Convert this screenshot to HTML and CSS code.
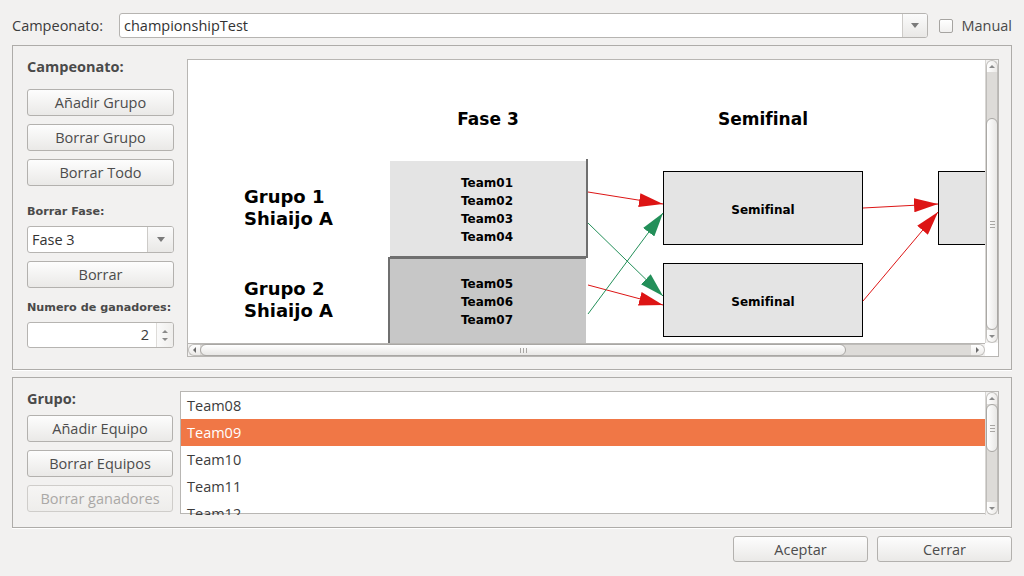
FILE: index.html
```html
<!DOCTYPE html>
<html lang="es">
<head>
<meta charset="utf-8">
<title>Campeonato</title>
<link rel="stylesheet" href="styles.css">
</head>
<body>
<div class="app">
  <div class="top-row">
    <span class="top-lbl">Campeonato:</span>
    <div class="combo combo-top">
      <span class="combo-text">championshipTest</span>
      <span class="combo-btn"><i class="tri-down"></i></span>
    </div>
    <label class="check"><span class="check-box"></span>Manual</label>
  </div>

  <section class="panel panel-upper">
    <div class="side">
      <div class="title">Campeonato:</div>
      <button class="btn btn-first">Añadir Grupo</button>
      <button class="btn btn-next">Borrar Grupo</button>
      <button class="btn btn-next">Borrar Todo</button>
      <div class="small-lbl lbl-fase">Borrar Fase:</div>
      <div class="combo combo-fase">
        <span class="combo-text">Fase 3</span>
        <span class="combo-btn"><i class="tri-down"></i></span>
      </div>
      <button class="btn btn-next">Borrar</button>
      <div class="small-lbl lbl-gan">Numero de ganadores:</div>
      <div class="spin">
        <span class="spin-val">2</span>
        <span class="spin-btns"><i class="tri-up-s"></i><i class="tri-down-s"></i></span>
      </div>
    </div>

    <div class="scrollview">
      <div class="canvas">
        <svg width="797" height="283" viewBox="0 0 797 283">
          <defs>
            <marker id="ar" markerUnits="userSpaceOnUse" markerWidth="24" markerHeight="14" refX="24" refY="7" orient="auto">
              <path d="M0,0 L24,7 L0,14 z" fill="#dd1515"/>
            </marker>
            <marker id="ag" markerUnits="userSpaceOnUse" markerWidth="24" markerHeight="14" refX="24" refY="7" orient="auto">
              <path d="M0,0 L24,7 L0,14 z" fill="#238f59"/>
            </marker>
          </defs>
          <text class="d-head" x="300" y="65" text-anchor="middle">Fase 3</text>
          <text class="d-head" x="575" y="65" text-anchor="middle">Semifinal</text>
          <text class="d-grp" x="56" y="143">Grupo 1</text>
          <text class="d-grp" x="56" y="165">Shiaijo A</text>
          <text class="d-grp" x="56" y="235">Grupo 2</text>
          <text class="d-grp" x="56" y="257">Shiaijo A</text>

          <rect x="202" y="101" width="196" height="95" fill="#e4e4e4"/>
          <rect x="398" y="99" width="2" height="99" fill="#6f6f6f"/>
          <rect x="202" y="196" width="198" height="2" fill="#6f6f6f"/>
          <rect x="202" y="199" width="196" height="84" fill="#c7c7c7"/>
          <rect x="200" y="197" width="2" height="86" fill="#6f6f6f"/>
          <rect x="200" y="197" width="198" height="2" fill="#6f6f6f"/>

          <text class="d-team" x="299" y="127" text-anchor="middle">Team01</text>
          <text class="d-team" x="299" y="145" text-anchor="middle">Team02</text>
          <text class="d-team" x="299" y="163" text-anchor="middle">Team03</text>
          <text class="d-team" x="299" y="181" text-anchor="middle">Team04</text>
          <text class="d-team" x="299" y="228" text-anchor="middle">Team05</text>
          <text class="d-team" x="299" y="246" text-anchor="middle">Team06</text>
          <text class="d-team" x="299" y="264" text-anchor="middle">Team07</text>

          <rect x="475.5" y="111.5" width="199" height="73" fill="#e4e4e4" stroke="#000"/>
          <rect x="475.5" y="203.5" width="199" height="73" fill="#e4e4e4" stroke="#000"/>
          <rect x="750.5" y="111.5" width="100" height="73" fill="#e4e4e4" stroke="#000"/>
          <text class="d-team" x="575" y="154" text-anchor="middle">Semifinal</text>
          <text class="d-team" x="575" y="246" text-anchor="middle">Semifinal</text>

          <line x1="400" y1="132" x2="475" y2="144" stroke="#dd1515" marker-end="url(#ar)"/>
          <line x1="400" y1="163" x2="475" y2="236" stroke="#238f59" marker-end="url(#ag)"/>
          <line x1="400" y1="225" x2="475" y2="245" stroke="#dd1515" marker-end="url(#ar)"/>
          <line x1="400" y1="254" x2="475" y2="153" stroke="#238f59" marker-end="url(#ag)"/>
          <line x1="675" y1="148" x2="750" y2="144" stroke="#dd1515" marker-end="url(#ar)"/>
          <line x1="675" y1="241" x2="750" y2="152" stroke="#dd1515" marker-end="url(#ar)"/>
        </svg>
      </div>
      <div class="vscroll">
        <span class="sb-btn"><i class="tri-up-s"></i></span>
        <div class="v-trough v-trough-upper"><div class="v-thumb"><i class="grip-h"></i></div></div>
        <span class="sb-btn sb-btn-end"><i class="tri-down-s"></i></span>
      </div>
      <div class="hscroll">
        <span class="sb-btn-h"><i class="tri-left-s"></i></span>
        <div class="h-trough"><div class="h-thumb"><i class="grip-v"></i></div></div>
        <span class="sb-btn-h sb-btn-h-end"><i class="tri-right-s"></i></span>
      </div>
      <div class="corner"></div>
    </div>
  </section>

  <section class="panel panel-lower">
    <div class="side side-lower">
      <div class="title">Grupo:</div>
      <button class="btn btn-first-l">Añadir Equipo</button>
      <button class="btn btn-next">Borrar Equipos</button>
      <button class="btn btn-next" disabled>Borrar ganadores</button>
    </div>
    <div class="listbox">
      <ul class="list">
        <li>Team08</li>
        <li class="sel">Team09</li>
        <li>Team10</li>
        <li>Team11</li>
        <li>Team12</li>
      </ul>
      <div class="vscroll">
        <span class="sb-btn"><i class="tri-up-s"></i></span>
        <div class="v-trough v-trough-list"><div class="v-thumb v-thumb-list"><i class="grip-h"></i></div></div>
        <span class="sb-btn sb-btn-end"><i class="tri-down-s"></i></span>
      </div>
    </div>
  </section>

  <div class="bottom-row">
    <button class="btn btn-dlg">Aceptar</button>
    <button class="btn btn-dlg">Cerrar</button>
  </div>
</div>
</body>
</html>
```

FILE: styles.css
```css
html, body {
  margin: 0;
  padding: 0;
}
body {
  background: #f2f1f0;
  font-family: "Open Sans", "DejaVu Sans", sans-serif;
  font-size: 14.5px;
  color: #3c3c3c;
}
.app {
  width: 1024px;
  height: 576px;
  box-sizing: border-box;
  padding: 13px 12px 0 12px;
  overflow: hidden;
}

/* top row */
.top-row {
  display: flex;
  align-items: center;
  height: 25px;
}
.top-lbl {
  width: 107px;
  flex: none;
  line-height: 25px;
}
.combo {
  box-sizing: border-box;
  border: 1px solid #b6b4b1;
  border-radius: 3px;
  background: #fff;
  display: flex;
  overflow: hidden;
}
.combo-top {
  flex: 1;
  height: 25px;
}
.combo-text {
  flex: 1;
  padding-left: 4px;
  line-height: 23px;
  color: #333;
}
.combo-btn {
  width: 24px;
  flex: none;
  border-left: 1px solid #cdcbc8;
  background: linear-gradient(#fbfbfb, #e9e8e6);
  display: flex;
  align-items: center;
  justify-content: center;
}
.tri-down {
  width: 0;
  height: 0;
  border-left: 4px solid transparent;
  border-right: 4px solid transparent;
  border-top: 5px solid #7a7a7a;
}
.check {
  display: flex;
  align-items: center;
  margin-left: 11px;
  gap: 8px;
  color: #4a4a4a;
}
.check-box {
  width: 14px;
  height: 14px;
  box-sizing: border-box;
  border: 1px solid #a6a4a1;
  border-radius: 2px;
  background: linear-gradient(#ffffff, #f1f0ef);
}

/* panels */
.panel {
  box-sizing: border-box;
  border: 1px solid #aeaca9;
  display: flex;
  box-shadow: 0 1px 0 #ffffff;
}
.panel-upper {
  margin-top: 7px;
  height: 325px;
  padding: 13px 12px 12px 14px;
  gap: 13px;
}
.panel-lower {
  margin-top: 7px;
  height: 151px;
  padding: 13px 12px 13px 14px;
  gap: 7px;
}
.side {
  width: 147px;
  flex: none;
  display: flex;
  flex-direction: column;
}
.side-lower {
  width: 146px;
}
.title {
  font-weight: 700;
  line-height: 20px;
  margin-top: -2px;
  color: #4a4a4a;
}
.btn {
  height: 27px;
  box-sizing: border-box;
  border: 1px solid #b3b1ae;
  border-radius: 3px;
  background: linear-gradient(#fdfdfd, #eae9e7);
  font: inherit;
  color: #4c4c4c;
  padding: 0;
  flex: none;
}
.btn:disabled {
  color: #aaa8a6;
  border-color: #cfcdca;
  background: linear-gradient(#f6f5f4, #eeedeb);
}
.btn-first { margin-top: 12px; }
.btn-first-l { margin-top: 6px; }
.btn-next { margin-top: 8px; }
.small-lbl {
  font-family: "DejaVu Sans", sans-serif;
  font-weight: 700;
  font-size: 11.2px;
  line-height: 16px;
  color: #4a4a4a;
  white-space: nowrap;
}
.lbl-fase { margin-top: 18px; }
.lbl-gan { margin-top: 12px; }
.combo-fase {
  margin-top: 6px;
  height: 27px;
}
.combo-fase .combo-text {
  line-height: 25px;
}
.combo-fase .combo-btn {
  width: 25px;
}
.spin {
  margin-top: 6px;
  height: 26px;
  box-sizing: border-box;
  border: 1px solid #b6b4b1;
  border-radius: 3px;
  background: #fff;
  display: flex;
  overflow: hidden;
}
.spin-val {
  flex: 1;
  text-align: right;
  padding-right: 7px;
  line-height: 24px;
}
.spin-btns {
  width: 16px;
  border-left: 1px solid #dedcd9;
  background: linear-gradient(to right, #fafafa, #efeeec);
  display: flex;
  flex-direction: column;
  align-items: center;
  justify-content: center;
  gap: 5px;
}
.tri-up-s, .tri-down-s, .tri-left-s, .tri-right-s {
  width: 0;
  height: 0;
  display: block;
}
.tri-up-s {
  border-left: 3px solid transparent;
  border-right: 3px solid transparent;
  border-bottom: 3px solid #8a8a8a;
}
.tri-down-s {
  border-left: 3px solid transparent;
  border-right: 3px solid transparent;
  border-top: 3px solid #8a8a8a;
}
.tri-left-s {
  border-top: 3px solid transparent;
  border-bottom: 3px solid transparent;
  border-right: 3px solid #6a6a6a;
}
.tri-right-s {
  border-top: 3px solid transparent;
  border-bottom: 3px solid transparent;
  border-left: 3px solid #6a6a6a;
}

/* diagram scroll view */
.scrollview {
  width: 812px;
  height: 298px;
  flex: none;
  box-sizing: border-box;
  border: 1px solid #b8b6b3;
  display: grid;
  grid-template-columns: 797px 13px;
  grid-template-rows: 283px 13px;
  background: #fff;
}
.canvas {
  overflow: hidden;
  background: #fff;
}
.canvas svg {
  display: block;
}
.d-head {
  font-family: "DejaVu Sans", sans-serif;
  font-weight: 700;
  font-size: 17px;
  fill: #000;
}
.d-grp {
  font-family: "DejaVu Sans", sans-serif;
  font-weight: 700;
  font-size: 18px;
  fill: #000;
}
.d-team {
  font-family: "DejaVu Sans", sans-serif;
  font-weight: 700;
  font-size: 12px;
  fill: #000;
}

/* scrollbars */
.vscroll {
  display: flex;
  flex-direction: column;
  background: #f2f1f0;
  border-left: 1px solid #d8d6d3;
  box-sizing: border-box;
}
.sb-btn {
  height: 12px;
  flex: none;
  display: flex;
  align-items: center;
  justify-content: center;
  border: 1px solid #c2c0bd;
  border-bottom: none;
  border-radius: 6px 6px 0 0;
  background: linear-gradient(to right, #ffffff, #eceae8);
  box-sizing: border-box;
}
.sb-btn-end {
  height: 13px;
  border: 1px solid #c2c0bd;
  border-top: none;
  border-radius: 0 0 6px 6px;
}
.v-trough {
  flex: 1;
  display: flex;
  flex-direction: column;
  background: #dddbd8;
  border-left: 1px solid #bebcb9;
  border-right: 1px solid #bebcb9;
  box-sizing: border-box;
}
.v-trough-upper {
  padding-top: 46px;
}
.v-trough-list {
  padding-bottom: 50px;
}
.v-thumb {
  flex: 1;
  margin: 0 -1px;
  border: 1px solid #a9a7a4;
  border-radius: 6px;
  background: linear-gradient(to right, #ffffff, #e8e7e5);
  display: flex;
  align-items: center;
  justify-content: center;
}
.grip-h {
  width: 5px;
  height: 7px;
  background: repeating-linear-gradient(#a8a6a3 0 1px, transparent 1px 3px);
}
.hscroll {
  display: flex;
  background: #f2f1f0;
  border-top: 1px solid #b8b6b3;
  box-sizing: border-box;
}
.sb-btn-h {
  width: 12px;
  flex: none;
  display: flex;
  align-items: center;
  justify-content: center;
  border: 1px solid #c2c0bd;
  border-right: none;
  border-radius: 6px 0 0 6px;
  background: linear-gradient(#ffffff, #eceae8);
  box-sizing: border-box;
}
.sb-btn-h-end {
  width: 14px;
  border: 1px solid #c2c0bd;
  border-left: none;
  border-radius: 0 6px 6px 0;
}
.h-trough {
  flex: 1;
  display: flex;
  background: #dddbd8;
  border-top: 1px solid #bebcb9;
  border-bottom: 1px solid #bebcb9;
  box-sizing: border-box;
  padding-right: 125px;
}
.h-thumb {
  flex: 1;
  margin: -1px 0;
  border: 1px solid #a9a7a4;
  border-radius: 6px;
  background: linear-gradient(#ffffff, #e8e7e5);
  display: flex;
  align-items: center;
  justify-content: center;
}
.grip-v {
  width: 7px;
  height: 5px;
  background: repeating-linear-gradient(to right, #a8a6a3 0 1px, transparent 1px 3px);
}
.corner {
  background: #ffffff;
}

/* list */
.listbox {
  flex: 1;
  height: 123px;
  box-sizing: border-box;
  border: 1px solid #b8b6b3;
  background: #fff;
  display: grid;
  grid-template-columns: 1fr 13px;
}
.list {
  list-style: none;
  margin: 0;
  padding: 0;
  overflow: hidden;
}
.list li {
  height: 27px;
  line-height: 27px;
  padding-left: 6px;
  color: #3c3c3c;
}
.list li.sel {
  background: #f07746;
  color: #ffffff;
}
.v-thumb-list {
  flex: none;
  height: 46px;
}

/* dialog buttons */
.bottom-row {
  margin-top: 8px;
  display: flex;
  justify-content: flex-end;
  gap: 9px;
}
.btn-dlg {
  width: 135px;
  height: 26px;
}
```
